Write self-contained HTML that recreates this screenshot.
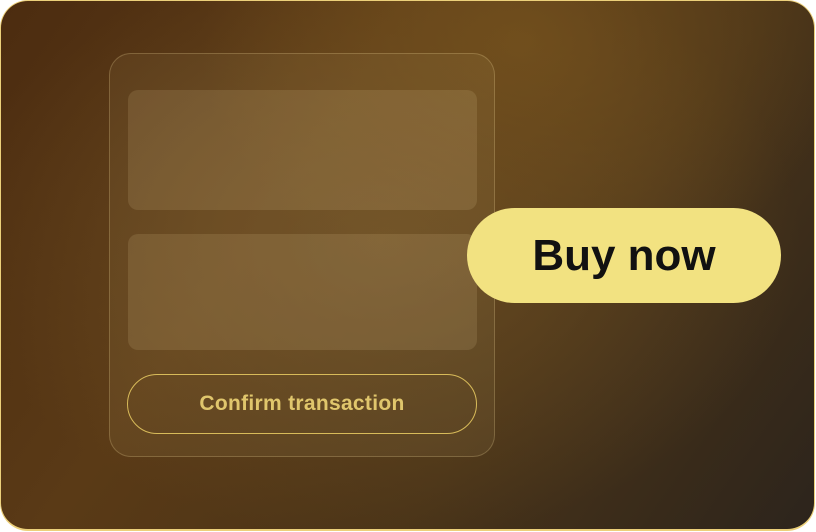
<!DOCTYPE html>
<html><head><meta charset="utf-8"><style>
html,body{margin:0;padding:0;background:#fff;}
.card{position:absolute;left:0;top:0;width:813px;height:528px;border:1.5px solid #ecd07a;border-bottom-width:2.5px;border-radius:28px;overflow:hidden;
background:
radial-gradient(ellipse 320px 260px at 520px 40px, rgba(120,84,30,0.75), rgba(120,84,30,0) 100%),
radial-gradient(ellipse 420px 300px at 380px 240px, rgba(120,88,40,0.6), rgba(120,88,40,0) 100%),
linear-gradient(125deg,#4c2c10 0%,#5a3a16 35%,#4a3418 65%,#2c241c 100%);}
.panel{position:absolute;left:108px;top:52px;width:384px;height:402px;border:1px solid rgba(255,230,170,0.22);border-radius:22px;background:rgba(255,230,170,0.06);}
.blk{position:absolute;left:18px;width:349px;border-radius:10px;background:rgba(255,230,170,0.12);}
.btn{position:absolute;left:17px;top:320px;width:348px;height:58px;border:1.5px solid #d8bb5a;border-radius:30px;color:#e0c66c;font:700 21px "Liberation Sans",sans-serif;display:flex;align-items:center;justify-content:center;letter-spacing:0.3px;}
.buy{position:absolute;left:466px;top:207px;width:314px;height:95px;background:#f2e281;border-radius:48px;display:flex;align-items:center;justify-content:center;font:700 44px "Liberation Sans",sans-serif;color:#111;}
</style></head><body>
<div class="card">
<div class="panel">
<div class="blk" style="top:36px;height:120px"></div>
<div class="blk" style="top:180px;height:116px"></div>
<div class="btn">Confirm transaction</div>
</div>
<div class="buy">Buy now</div>
</div>
</body></html>
